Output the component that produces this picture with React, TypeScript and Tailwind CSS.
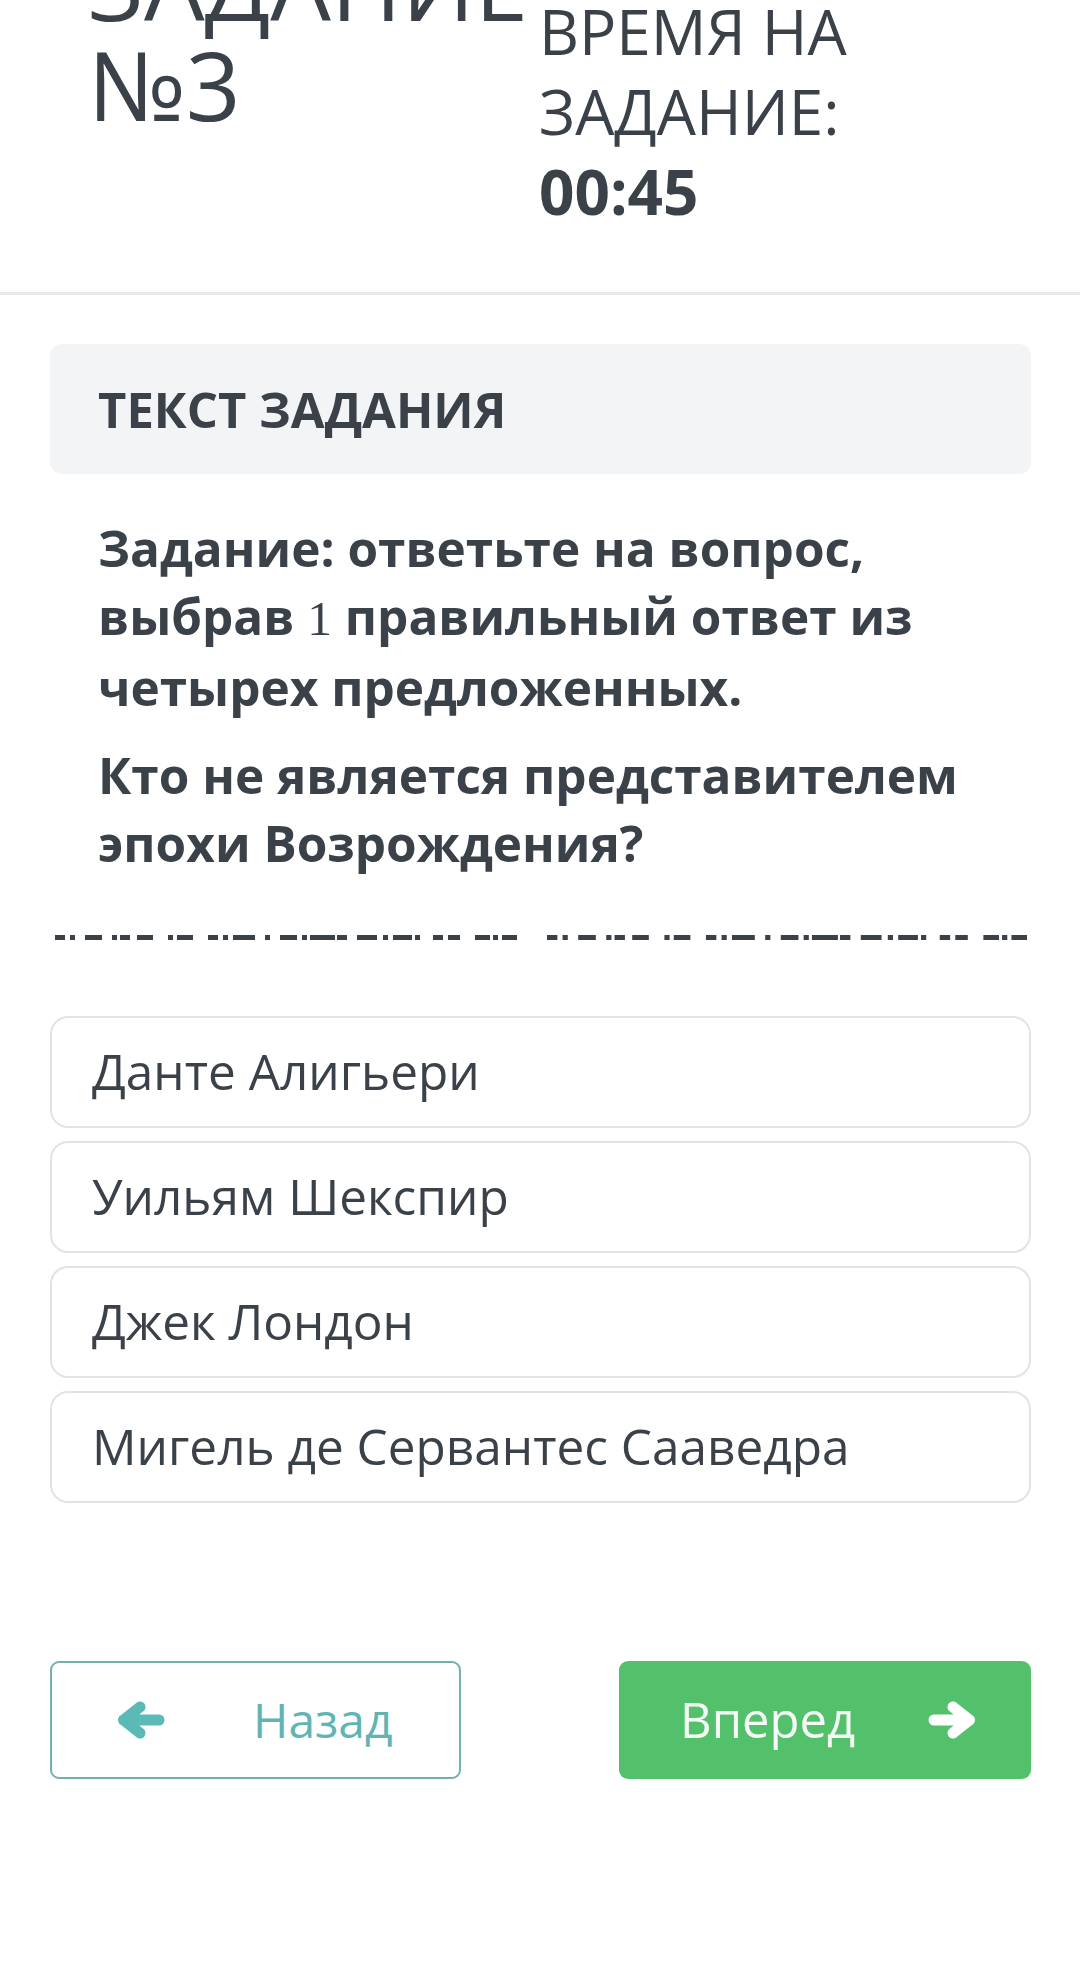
import React from "react";

const font = { fontFamily: '"Open Sans", "Noto Sans", sans-serif' };

const answers = [
  "Данте Алигьери",
  "Уильям Шекспир",
  "Джек Лондон",
  "Мигель де Сервантес Сааведра",
];

// dash pattern of the separator (one half, offsets from its start)
const dashes: [number, number][] = [
  [0, 10], [15, 20], [30, 47], [57, 62], [65, 75], [82, 98], [113, 118],
  [122, 138], [153, 163], [168, 173], [178, 200], [210, 215], [225, 242],
  [247, 252], [255, 280], [282, 292], [302, 322], [328, 333], [338, 357],
  [360, 365], [378, 388], [393, 405], [420, 435], [438, 443], [447, 462],
];

const DashedSeparator = () => (
  <svg width="981" height="5" viewBox="50 0 981 5" className="block">
    <g transform="translate(55 0)" fill="#3b4149">
      {dashes.map(([a, b]) => (
        <rect key={a} x={a} y={0} width={b - a} height={5} />
      ))}
    </g>
    <g transform="translate(547 0) scale(1.039 1)" fill="#3b4149">
      {dashes.map(([a, b]) => (
        <rect key={a} x={a} y={0} width={b - a} height={5} />
      ))}
    </g>
  </svg>
);

// thick rounded arrow, pointing left unless flipped
const Arrow = ({ color, right }: { color: string; right?: boolean }) => (
  <svg
    width="48"
    height="38"
    viewBox="0 0 48 38"
    className={right ? "block -scale-x-100" : "block"}
  >
    <path
      d="M23 6 L6.5 19 L23 32 M6.5 19 H42"
      fill="none"
      stroke={color}
      strokeWidth="11"
      strokeLinecap="round"
      strokeLinejoin="round"
    />
  </svg>
);

export default function App() {
  return (
    <div className="w-[1080px] min-h-[1965px] bg-white text-[#3b4149] overflow-hidden" style={font}>
      {/* Header */}
      <div className="flex items-start pb-[61px] border-b-[3px] border-[#e8e8e8]">
        <div className="w-[539px] shrink-0 pl-[88px]">
          <h1 className="mt-[-66px] text-[96px] leading-[100px] font-normal">
            ЗАДАНИЕ
            <br />
            №3
          </h1>
        </div>
        <div className="mt-[-9px] text-[62px] leading-[80px]">
          <div>ВРЕМЯ НА</div>
          <div>ЗАДАНИЕ:</div>
          <div className="font-bold">00:45</div>
        </div>
      </div>

      <div className="pl-[50px] pr-[49px] pt-[49px]">
        {/* Task header */}
        <div className="h-[130px] rounded-[12px] bg-[#f3f4f6] flex items-center pl-[48px]">
          <h2 className="text-[49px] font-bold leading-none">ТЕКСТ ЗАДАНИЯ</h2>
        </div>

        {/* Question */}
        <div className="pl-[48px] pr-[20px] pt-[40px] text-[49.5px] leading-[68px] font-bold">
          <p>
            Задание: ответьте на вопрос, выбрав{" "}
            <span className="font-normal" style={{ fontFamily: '"Liberation Serif", serif' }}>
              1
            </span>{" "}
            правильный ответ из четырех предложенных.
          </p>
          <p className="mt-[20px]">Кто не является представителем эпохи Возрождения?</p>
        </div>

        <div className="mt-[58px]">
          <DashedSeparator />
        </div>

        {/* Answers */}
        <div className="mt-[76px] flex flex-col gap-[13px]">
          {answers.map((a) => (
            <div
              key={a}
              className="h-[112px] flex items-center rounded-[18px] border-2 border-[#e3e3e3] pl-[40px] text-[49.5px] leading-none"
            >
              {a}
            </div>
          ))}
        </div>

        {/* Navigation */}
        <div className="mt-[158px] flex justify-between">
          <button className="w-[411px] h-[118px] flex items-center rounded-[9px] border-2 border-[#74b0b0] pl-[65px] gap-[88px] text-[48px] text-[#62b4b4] bg-white">
            <Arrow color="#5bb9b6" />
            <span>Назад</span>
          </button>
          <button className="w-[412px] h-[118px] flex items-center rounded-[9px] bg-[#53c16b] pl-[61px] gap-[73px] text-[49px] text-[#f4fbf5]">
            <span>Вперед</span>
            <Arrow color="#ffffff" right />
          </button>
        </div>
      </div>
    </div>
  );
}
